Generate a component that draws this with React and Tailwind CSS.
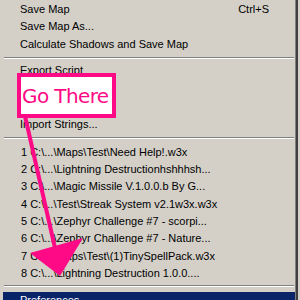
// Classic menu screenshot with a "Go There" annotation
const pink = "#ff0a86";

const topItems = [
    { label: "Save Map", shortcut: "Ctrl+S" },
    { label: "Save Map As..." },
    { label: "Calculate Shadows and Save Map" },
];

// the two middle entries sit under the annotation box, so they stay blank
const scriptItems = ["Export Script", "", "", "Import Strings..."];

const recentFiles = [
    "1 C:\\...\\Maps\\Test\\Need Help!.w3x",
    "2 C:\\...\\Lightning Destructionhshhhsh...",
    "3 C:\\...\\Magic Missile V.1.0.0.b By G...",
    "4 C:\\...\\Test\\Streak System v2.1w3x.w3x",
    "5 C:\\...\\Zephyr Challenge #7 - scorpi...",
    "6 C:\\...\\Zephyr Challenge #7 - Nature...",
    "7 C:\\...\\Maps\\Test\\(1)TinySpellPack.w3x",
    "8 C:\\...\\Lightning Destruction 1.0.0....",
];

// ---------------------------- Separator ----------------------------
const Separator = ({ className }) => (
    <div className={className}>
        <div className="ml-[4px] mr-[1px] border-t border-t-[#808080] border-b border-b-white" />
    </div>
);

const App = () => {
    return (
        <div
            className="relative w-[300px] h-[300px] overflow-hidden bg-[#d4d0c8] flex text-[11px] text-black"
            style={{ fontFamily: '"Liberation Sans", Arial, sans-serif' }}
        >
            {/* Menu body */}
            <div className="w-[295px] flex flex-col">
                {topItems.map((item) => (
                    <div key={item.label} className="h-[17.5px] shrink-0 flex items-center justify-between pl-[20px] pr-[26px]">
                        <span>{item.label}</span>
                        {item.shortcut && <span>{item.shortcut}</span>}
                    </div>
                ))}

                <Separator className="h-[9px] pt-[4px] shrink-0" />

                {scriptItems.map((label, idx) => (
                    <div key={idx} className="h-[18px] shrink-0 flex items-center pl-[20px]">
                        {label}
                    </div>
                ))}

                <Separator className="h-[10px] pt-[3px] shrink-0" />

                {recentFiles.map((file) => (
                    <div key={file} className="h-[17.3px] shrink-0 flex items-center pl-[21px]">
                        {file}
                    </div>
                ))}

                <Separator className="h-[10px] pt-[3px] shrink-0" />

                {/* Highlighted item */}
                <div className="h-[17.5px] shrink-0 ml-[3px] bg-[#0a246a] text-white flex items-center pl-[17px]">
                    Preferences
                </div>
            </div>

            {/* Right edge of the menu */}
            <div className="w-px bg-[#808080]" />
            <div className="w-[2px] bg-[#404040]" />
            <div className="flex-1 bg-[#d4d0c8]" />

            {/* Annotation box */}
            <div
                className="absolute left-[17px] top-[73px] w-[99px] h-[45px] bg-white border-[4px] border-[#ff0a86] flex items-center pl-[1px] text-[#ff0a86] text-[20px] tracking-[-0.6px]"
                style={{ fontFamily: '"DejaVu Sans", sans-serif' }}
            >
                Go There
            </div>

            {/* Annotation arrow */}
            <svg className="absolute left-0 top-0" width="300" height="300" viewBox="0 0 300 300">
                <line x1="25" y1="116" x2="55" y2="248" stroke={pink} strokeWidth="4" />
                <polygon points="30,253 83,238 60,276" fill={pink} />
            </svg>
        </div>
    );
};

export default App;
